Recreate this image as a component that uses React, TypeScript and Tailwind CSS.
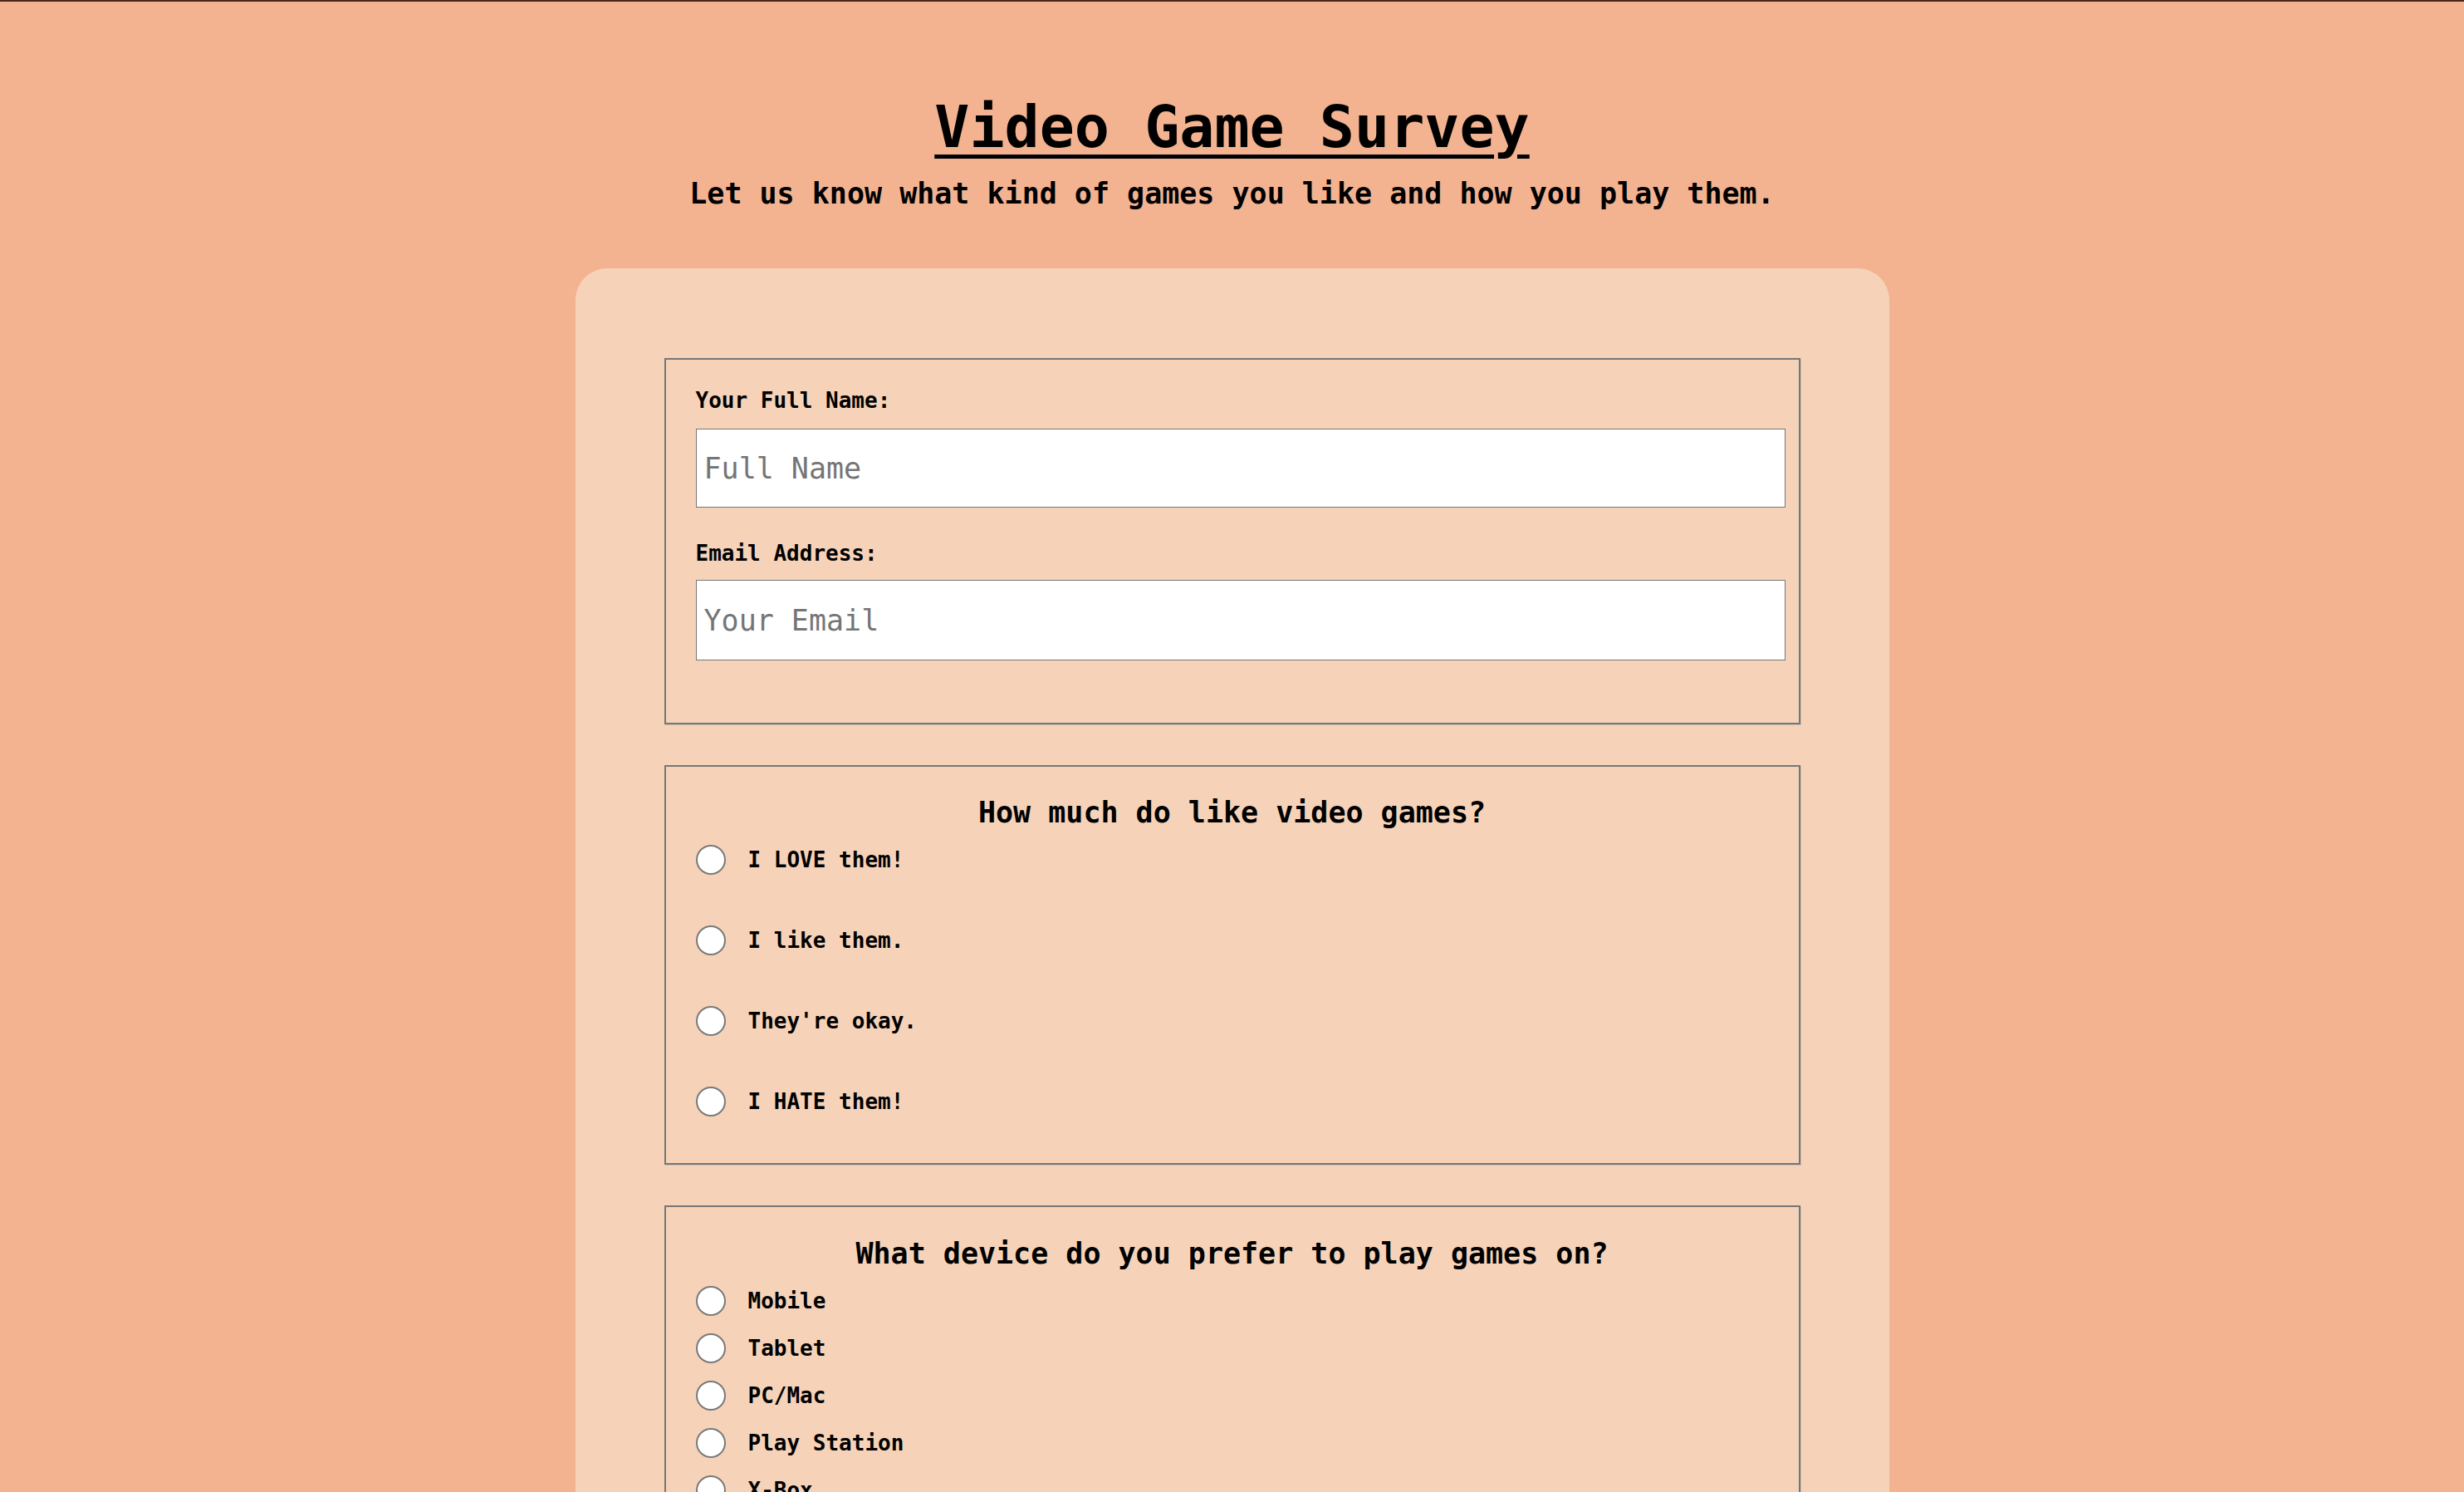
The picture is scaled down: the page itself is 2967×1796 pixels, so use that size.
import React from 'react';

const mono = "font-['DejaVu_Sans_Mono',_'Liberation_Mono',_monospace]";

const likeOptions = ['I LOVE them!', 'I like them.', "They're okay.", 'I HATE them!'];
const deviceOptions = ['Mobile', 'Tablet', 'PC/Mac', 'Play Station', 'X-Box', 'Nintendo'];

const box = 'border-2 border-[#767676] shadow-[1px_1px_0_#c9bfb6]';

const Radio: React.FC<{ name: string; label: string }> = ({ name, label }) => (
  <label className="flex items-center gap-[27px] cursor-pointer">
    <input
      type="radio"
      name={name}
      className="appearance-none w-[36px] h-[36px] rounded-full border-2 border-[#7a7a7a] bg-white shrink-0 checked:bg-[#1a73e8]"
    />
    <span className="text-[26px] leading-[30px] font-bold text-black">{label}</span>
  </label>
);

export default function App() {
  return (
    <div className={`min-h-screen bg-[#f3b391] border-t-2 border-[#4a281c] pb-24 ${mono}`}>
      <header className="pt-[110px] text-center text-black">
        <h1 className="text-[70px] leading-[82px] font-bold underline decoration-[5px] underline-offset-[9px]">
          Video Game Survey
        </h1>
        <p className="mt-[19px] text-[35px] leading-[40px] font-bold">
          Let us know what kind of games you like and how you play them.
        </p>
      </header>

      <form className="w-[1582px] mx-auto mt-[70px] bg-[#f6d3b8] rounded-[38px] px-[107px] pt-[108px] pb-[108px] flex flex-col gap-[49px]">
        {/* Name + email */}
        <div className={`${box} pl-[36px] pr-[16px] pt-[34px] pb-[75px]`}>
          <label className="block text-[26px] leading-[30px] font-bold text-black mb-[19px]">Your Full Name:</label>
          <input
            type="text"
            placeholder="Full Name"
            className="block w-full h-[95px] bg-white border border-[#767676] px-[9px] text-[35px] placeholder:text-[#757575] outline-none"
          />
          <label className="block mt-[40px] text-[26px] leading-[30px] font-bold text-black mb-[17px]">Email Address:</label>
          <input
            type="email"
            placeholder="Your Email"
            className="block w-full h-[97px] bg-white border border-[#767676] px-[9px] text-[35px] placeholder:text-[#757575] outline-none"
          />
        </div>

        {/* How much */}
        <div className={`${box} px-[36px] pt-[35px] pb-[56px]`}>
          <h2 className="text-center text-[35px] leading-[40px] font-bold text-black mb-[19px]">How much do like video games?</h2>
          <div className="flex flex-col gap-[61px]">
            {likeOptions.map((opt) => (
              <Radio key={opt} name="like" label={opt} />
            ))}
          </div>
        </div>

        {/* Device */}
        <div className={`${box} px-[36px] pt-[36px] pb-[56px]`}>
          <h2 className="text-center text-[35px] leading-[40px] font-bold text-black mb-[19px]">What device do you prefer to play games on?</h2>
          <div className="flex flex-col gap-[21px]">
            {deviceOptions.map((opt) => (
              <Radio key={opt} name="device" label={opt} />
            ))}
          </div>
        </div>
      </form>
    </div>
  );
}
